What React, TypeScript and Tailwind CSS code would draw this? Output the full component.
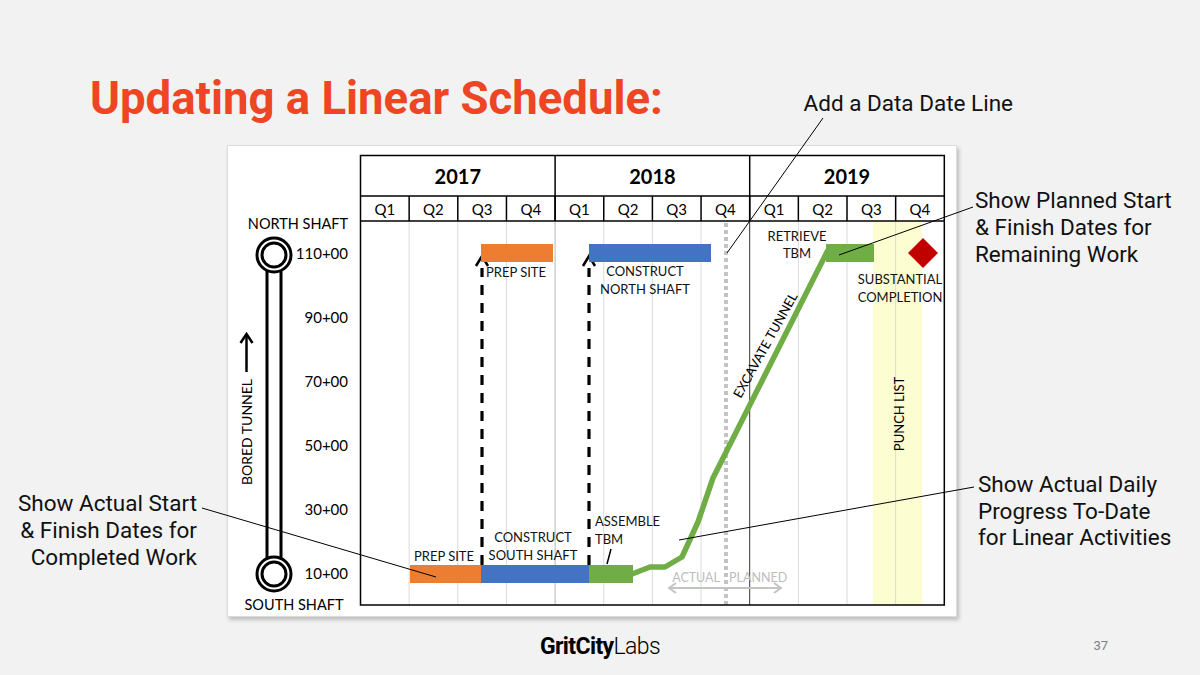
import React from 'react';

// quarter grid of the linear schedule
const X0 = 360.5;
const QW = 48.65;
const qx = (i: number) => X0 + i * QW;

const years = ['2017', '2018', '2019'];
const quarters = ['Q1', 'Q2', 'Q3', 'Q4'];

const stations = [
  { label: '110+00', y: 253 },
  { label: '90+00', y: 317 },
  { label: '70+00', y: 381 },
  { label: '50+00', y: 445 },
  { label: '30+00', y: 509 },
  { label: '10+00', y: 573 },
];

const ORANGE = '#ed7d31';
const BLUE = '#4472c4';
const GREEN = '#70ad47';

const ShaftIcon: React.FC<{ cy: number }> = ({ cy }) => (
  <g fill="white" stroke="black" strokeWidth={3}>
    <circle cx={274} cy={cy} r={17} />
    <circle cx={274} cy={cy} r={12} />
  </g>
);

const DashedArrow: React.FC<{ x: number }> = ({ x }) => (
  <g stroke="black" fill="none">
    <line x1={x} y1={565} x2={x} y2={268} strokeWidth={3.2} strokeDasharray="10 8" />
    <polyline points={`${x - 6},266 ${x},256 ${x + 6},266`} strokeWidth={2.5} />
  </g>
);

const Label: React.FC<{ x: number; y: number; lines: string[]; anchor?: 'start' | 'middle' | 'end'; gap?: number }> = ({
  x,
  y,
  lines,
  anchor = 'middle',
  gap = 18,
}) => (
  <text x={x} y={y} textAnchor={anchor} dominantBaseline="central" fontSize={13} fill="#111">
    {lines.map((l, i) => (
      <tspan key={l} x={x} dy={i === 0 ? 0 : gap}>
        {l}
      </tspan>
    ))}
  </text>
);

const ScheduleChart: React.FC = () => (
  <svg
    width={728}
    height={470}
    viewBox="228 146 728 470"
    className="block font-['Lato',sans-serif]"
  >
    {/* punch list band */}
    <rect x={873} y={221} width={49} height={384} fill="#fdfdd2" />

    {/* body gridlines */}
    {Array.from({ length: 11 }, (_, k) => k + 1).map((i) => (
      <line
        key={i}
        x1={qx(i)}
        y1={221}
        x2={qx(i)}
        y2={605}
        stroke={i === 8 ? '#333' : i === 4 ? '#b5b5b5' : '#dadada'}
        strokeWidth={1}
      />
    ))}

    {/* data date */}
    <line x1={726} y1={223} x2={726} y2={605} stroke="#c4c4c4" strokeWidth={4} strokeDasharray="4 3" />

    {/* header */}
    <g stroke="black" strokeWidth={1.5} fill="none">
      <rect x={X0} y={155.5} width={qx(12) - X0} height={449.5} />
      <line x1={X0} y1={196} x2={qx(12)} y2={196} />
      <line x1={X0} y1={221} x2={qx(12)} y2={221} />
      {[4, 8].map((i) => (
        <line key={i} x1={qx(i)} y1={155.5} x2={qx(i)} y2={221} />
      ))}
      {Array.from({ length: 11 }, (_, k) => k + 1).map((i) => (
        <line key={i} x1={qx(i)} y1={196} x2={qx(i)} y2={221} />
      ))}
    </g>
    {years.map((y, i) => (
      <text
        key={y}
        x={qx(i * 4 + 2)}
        y={176}
        textAnchor="middle"
        dominantBaseline="central"
        fontSize={20}
        fontWeight={700}
      >
        {y}
      </text>
    ))}
    {Array.from({ length: 12 }, (_, i) => (
      <text key={i} x={qx(i) + QW / 2} y={209} textAnchor="middle" dominantBaseline="central" fontSize={15}>
        {quarters[i % 4]}
      </text>
    ))}

    {/* left axis */}
    <line x1={267} y1={262} x2={267} y2={566} stroke="black" strokeWidth={3} />
    <line x1={281} y1={262} x2={281} y2={566} stroke="black" strokeWidth={3} />
    <ShaftIcon cy={255} />
    <ShaftIcon cy={574} />
    <text x={298} y={223} textAnchor="middle" dominantBaseline="central" fontSize={14.5}>
      NORTH SHAFT
    </text>
    <text x={294} y={604} textAnchor="middle" dominantBaseline="central" fontSize={14.5}>
      SOUTH SHAFT
    </text>
    {stations.map((s) => (
      <text key={s.label} x={348} y={s.y} textAnchor="end" dominantBaseline="central" fontSize={15}>
        {s.label}
      </text>
    ))}
    <text
      x={246}
      y={432}
      textAnchor="middle"
      dominantBaseline="central"
      fontSize={14}
      transform="rotate(-90 246 432)"
    >
      BORED TUNNEL
    </text>
    <g stroke="black" strokeWidth={2.5} fill="none">
      <line x1={246.5} y1={336} x2={246.5} y2={372} />
      <polyline points="240.5,343 246.5,334 252.5,343" />
    </g>

    {/* arrows from actual to planned */}
    <DashedArrow x={482} />
    <DashedArrow x={589} />

    {/* planned bars at north shaft */}
    <rect x={481} y={244} width={72} height={18} fill={ORANGE} />
    <rect x={589} y={244} width={122} height={18} fill={BLUE} />
    <rect x={826} y={244} width={48} height={18} fill={GREEN} />
    <polygon points="923,238 938,253 923,268 908,253" fill="#c00000" />

    {/* actual bars at south shaft */}
    <rect x={410} y={565} width={71} height={18} fill={ORANGE} />
    <rect x={481} y={565} width={108} height={18} fill={BLUE} />
    <rect x={589} y={565} width={44} height={18} fill={GREEN} />

    {/* excavate tunnel progress */}
    <polyline
      points="632,574 650,567 665,567 682,557 698,522 713,478 828,250"
      fill="none"
      stroke={GREEN}
      strokeWidth={5.5}
      strokeLinejoin="round"
    />

    {/* labels */}
    <Label x={516} y={272} lines={['PREP SITE']} />
    <Label x={645} y={271} lines={['CONSTRUCT', 'NORTH SHAFT']} />
    <Label x={797} y={236} lines={['RETRIEVE', 'TBM']} gap={17} />
    <Label x={900} y={279} lines={['SUBSTANTIAL', 'COMPLETION']} />
    <Label x={444} y={556} lines={['PREP SITE']} />
    <Label x={533} y={537} lines={['CONSTRUCT', 'SOUTH SHAFT']} />
    <Label x={595} y={521} lines={['ASSEMBLE', 'TBM']} anchor="start" />
    <line x1={611} y1={549} x2={607} y2={564} stroke="black" strokeWidth={1.5} />
    <text
      x={765}
      y={345}
      textAnchor="middle"
      dominantBaseline="central"
      fontSize={13}
      transform="rotate(-61 765 345)"
    >
      EXCAVATE TUNNEL
    </text>
    <text
      x={899}
      y={414}
      textAnchor="middle"
      dominantBaseline="central"
      fontSize={13}
      transform="rotate(-90 899 414)"
    >
      PUNCH LIST
    </text>

    {/* actual | planned legend */}
    <text x={720} y={577} textAnchor="end" dominantBaseline="central" fontSize={12.5} fill="#bdbdbd">
      ACTUAL
    </text>
    <text x={729} y={577} dominantBaseline="central" fontSize={12.5} fill="#bdbdbd">
      PLANNED
    </text>
    <g stroke="#c4c4c4" strokeWidth={2} fill="none">
      <line x1={669} y1={588} x2={781} y2={588} />
      <polyline points="676,583 669,588 676,593" />
      <polyline points="774,583 781,588 774,593" />
    </g>
  </svg>
);

export default function App() {
  return (
    <div className="relative h-[675px] w-[1200px] overflow-hidden bg-[#f2f2f2] font-['Roboto',sans-serif] text-[#111]">
      <div className="flex h-[145px] items-start pl-[90px] pt-[76px]">
        <h1 className="text-[45.5px] font-bold leading-none text-[#ee4524]">Updating a Linear Schedule:</h1>
        <div className="ml-auto mr-[187px] mt-[16px] text-[22.5px] leading-none">Add a Data Date Line</div>
      </div>

      <div className="flex h-[472px]">
        <div className="flex w-[227px] flex-col items-end justify-end pb-[46px] pr-[30px] text-right text-[22.5px] leading-[27px]">
          <p>Show Actual Start</p>
          <p>&amp; Finish Dates for</p>
          <p>Completed Work</p>
        </div>

        <div className="h-[472px] w-[730px] border border-[#dcdcdc] bg-white shadow-[2px_3px_4px_rgba(0,0,0,0.22)]">
          <ScheduleChart />
        </div>

        <div className="flex flex-1 flex-col pl-[18px] pt-[42px] text-[22.5px]">
          <div className="leading-[27px]">
            <p>Show Planned Start</p>
            <p>&amp; Finish Dates for</p>
            <p>Remaining Work</p>
          </div>
          <div className="ml-[3px] mt-[203px] leading-[26.5px]">
            <p>Show Actual Daily</p>
            <p>Progress To-Date</p>
            <p>for Linear Activities</p>
          </div>
        </div>
      </div>

      <div className="grid h-[58px] grid-cols-[1fr_auto_1fr] items-center">
        <div />
        <div className="text-[23px] leading-none tracking-[-0.6px] text-black">
          <span className="font-bold">GritCity</span>
          <span className="font-light">Labs</span>
        </div>
        <div className="justify-self-end pr-[92px] text-[13px] text-[#808080]">37</div>
      </div>

      {/* leader lines from the notes to the chart */}
      <svg
        className="pointer-events-none absolute inset-0"
        width={1200}
        height={675}
        viewBox="0 0 1200 675"
      >
        <g stroke="black" strokeWidth={1}>
          <line x1={823} y1={118} x2={727} y2={253} />
          <line x1={973} y1={207} x2={839} y2={255} />
          <line x1={974} y1={487} x2={679} y2={540} />
          <line x1={202} y1={508} x2={436} y2={577} />
        </g>
      </svg>
    </div>
  );
}
